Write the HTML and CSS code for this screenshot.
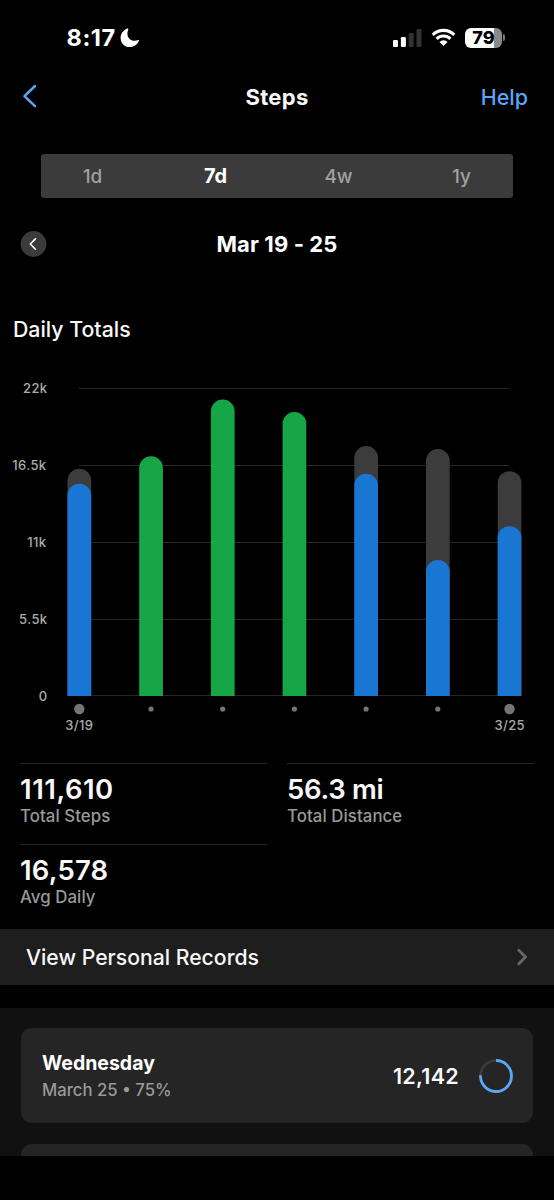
FILE: index.html
```html
<!DOCTYPE html>
<html lang="en">
<head>
    <meta charset="UTF-8">
    <meta name="viewport" content="width=device-width, initial-scale=1.0">
    <title>Steps</title>
    <link rel="stylesheet" href="styles.css">
</head>
<body>
    <!-- Status Bar -->
    <div class="status-bar">
        <div class="status-left">
            <span class="time">8:17</span>
            <svg class="moon" width="20" height="20" viewBox="0 0 20 20">
                <path d="M7.300 .6C3.700 2 .6 5.500 .6 9.900c0 5.200 4 9.200 9.200 9.200 4.200 0 7.900-2.700 9.200-6.300.2-.7-.3-1-.9-.7-1 .5-2.100.7-3.300.7-4.400 0-7.400-3-7.400-7.400 0-1.400.3-2.800.9-4 .3-.6-.4-1-1-.8z" fill="#fff"/>
            </svg>
        </div>
        <div class="status-right">
            <svg width="29" height="18" viewBox="0 0 29 18">
                <rect x="0" y="11" width="5" height="7" rx="1.300" fill="#fff"/>
                <rect x="7.900" y="8" width="5" height="10" rx="1.300" fill="#fff"/>
                <rect x="15.700" y="4" width="5" height="14" rx="1.300" fill="#333"/>
                <rect x="23.500" y="0" width="5" height="18" rx="1.300" fill="#333"/>
            </svg>
            <svg class="wifi" width="25" height="19" viewBox="0 0 26 19">
                <path d="M1.800 6.700a16 16 0 0 1 22.400 0M5.800 10.900a10.300 10.300 0 0 1 14.400 0" fill="none" stroke="#fff" stroke-width="3.200"/>
                <path d="M8.800 14.100a6 6 0 0 1 8.400 0L13 18.300z" fill="#fff"/>
            </svg>
            <div class="battery"><span>79</span></div>
            <div class="battery-tip"></div>
        </div>
    </div>

    <!-- Navigation -->
    <div class="nav">
        <svg class="back" width="14" height="24" viewBox="0 0 14 24">
            <path d="M13 2L2.500 12.200l10.500 10" fill="none" stroke="#58a6f5" stroke-width="2.500" stroke-linecap="round" stroke-linejoin="round"/>
        </svg>
        <h1>Steps</h1>
        <a class="help">Help</a>
    </div>

    <!-- Period Tabs -->
    <div class="tabs">
        <span>1d</span>
        <span class="active">7d</span>
        <span>4w</span>
        <span>1y</span>
    </div>

    <div class="range">
        <svg width="26" height="26" viewBox="0 0 26 26">
            <circle cx="12.500" cy="13" r="12.900" fill="#3b3b3b"/>
            <path d="M14.400 7.900l-5.100 5.100 5.100 5.200" fill="none" stroke="#fff" stroke-width="1.600" stroke-linecap="round" stroke-linejoin="round"/>
        </svg>
        <h2>Mar 19 - 25</h2>
    </div>

    <h3>Daily Totals</h3>

    <!-- Chart -->
    <svg class="chart" width="554" height="375" viewBox="0 370 554 375">
        <g class="grid">
            <path d="M79 388.500H509"/>
            <path d="M79 465.500H509"/>
            <path d="M79 542.500H509"/>
            <path d="M79 619.500H509"/>
            <path d="M79 695.500H509"/>
        </g>
        <g class="axis y-axis">
            <text x="47.500" y="393">22k</text>
            <text x="46.500" y="470">16.5k</text>
            <text x="46.500" y="547">11k</text>
            <text x="47.500" y="624">5.5k</text>
            <text x="47.500" y="701">0</text>
        </g>
        <g class="goal">
            <path d="M67.500 696V480.500a11.850 11.850 0 0 1 23.700 0V696z"/>
            <path d="M354.300 696V457.800a11.850 11.850 0 0 1 23.700 0V696z"/>
            <path d="M426 696V460.800a11.850 11.850 0 0 1 23.700 0V696z"/>
            <path d="M497.700 696V483a11.850 11.850 0 0 1 23.700 0V696z"/>
        </g>
        <g class="under">
            <path d="M67.500 696V495.500a11.850 11.850 0 0 1 23.700 0V696z"/>
            <path d="M354.300 696V485.700a11.850 11.850 0 0 1 23.700 0V696z"/>
            <path d="M426 696V571.800a11.850 11.850 0 0 1 23.700 0V696z"/>
            <path d="M497.700 696V538a11.850 11.850 0 0 1 23.700 0V696z"/>
        </g>
        <g class="met">
            <path d="M139.200 696V468a11.850 11.850 0 0 1 23.700 0V696z"/>
            <path d="M210.900 696V411.400a11.850 11.850 0 0 1 23.700 0V696z"/>
            <path d="M282.600 696V423.800a11.850 11.850 0 0 1 23.700 0V696z"/>
        </g>
        <g class="dots">
            <circle cx="79.300" cy="709" r="5.200"/>
            <circle cx="151" cy="709" r="2.600"/>
            <circle cx="222.700" cy="709" r="2.600"/>
            <circle cx="294.400" cy="709" r="2.600"/>
            <circle cx="366.100" cy="709" r="2.600"/>
            <circle cx="437.800" cy="709" r="2.600"/>
            <circle cx="509.500" cy="709" r="5.200"/>
        </g>
        <g class="axis x-axis">
            <text x="79.300" y="730">3/19</text>
            <text x="509.700" y="730">3/25</text>
        </g>
    </svg>

    <!-- Totals -->
    <div class="stats">
        <div class="stat">
            <div class="value total">111,610</div>
            <div class="label">Total Steps</div>
        </div>
        <div class="stat">
            <div class="value distance">56.3 mi</div>
            <div class="label">Total Distance</div>
        </div>
        <div class="stat">
            <div class="value">16,578</div>
            <div class="label">Avg Daily</div>
        </div>
    </div>

    <div class="records">
        <span>View Personal Records</span>
        <svg width="12" height="18" viewBox="0 0 12 18">
            <path d="M2.800 2.300L9.500 9l-6.700 6.700" fill="none" stroke="#666" stroke-width="3" stroke-linecap="round" stroke-linejoin="round"/>
        </svg>
    </div>

    <!-- Day List -->
    <div class="days">
        <div class="day">
            <div>
                <div class="day-name">Wednesday</div>
                <div class="day-date">March 25 • 75%</div>
            </div>
            <div class="day-steps">12,142</div>
            <svg width="34" height="34" viewBox="0 0 34 34">
                <circle cx="17" cy="17" r="15.500" fill="none" stroke="#3c3c3c" stroke-width="2.600"/>
                <path d="M17 1.500A15.500 15.500 0 1 1 1.500 16.300" fill="none" stroke="#5aa5f5" stroke-width="2.800"/>
            </svg>
        </div>
        <div class="day"></div>
    </div>
</body>
</html>
```
FILE: styles.css
```css
/* General Styles */
* {
    box-sizing: border-box;
}

body {
    font-family: Inter, "Liberation Sans", sans-serif;
    background-color: #000;
    color: #f8f8f8;
    width: 554px;
    height: 1200px;
    margin: 0;
    overflow: hidden;
}

h1, h2, h3 {
    margin: 0;
    white-space: nowrap;
}

svg {
    display: block;
    flex-shrink: 0;
}

/* Status Bar */
.status-bar {
    display: flex;
    justify-content: space-between;
    align-items: center;
    height: 75px;
    padding: 0 49px 0 66.5px;
}

.status-left,
.status-right {
    display: flex;
    align-items: center;
}

.time {
    font-size: 23.5px;
    font-weight: 700;
    line-height: 28px;
    letter-spacing: 0.6px;
    color: #fff;
}

.moon {
    margin-left: 4.5px;
}

.wifi {
    margin: 0 9px;
}

.battery {
    width: 37px;
    height: 20px;
    border-radius: 6px;
    background: linear-gradient(to right, #fff 29px, #8a8a8a 29px);
    color: #000;
    font-size: 18px;
    font-weight: 800;
    line-height: 20px;
    text-align: center;
}

.battery-tip {
    width: 2px;
    height: 7px;
    margin-left: 1px;
    border-radius: 0 2px 2px 0;
    background-color: #777;
}

/* Navigation */
.nav {
    display: grid;
    grid-template-columns: 1fr auto 1fr;
    align-items: center;
    height: 43px;
    padding: 0 26px 0 22px;
}

.nav h1 {
    padding-left: 4px;
    font-size: 22px;
    font-weight: 700;
    letter-spacing: 0.3px;
}

.back {
    margin-top: -2px;
}

.help {
    justify-self: end;
    font-size: 21.5px;
    font-weight: 500;
    color: #58a6f5;
}

/* Period Tabs */
.tabs {
    display: flex;
    justify-content: center;
    height: 44px;
    margin: 36px 41px 0;
    border-radius: 3px;
    background-color: #3b3b3b;
    color: #a0a0a0;
    font-size: 19px;
    font-weight: 500;
    line-height: 45px;
    text-align: center;
}

.tabs span {
    flex: 0 0 123px;
}

.tabs .active {
    color: #fff;
    font-size: 20px;
    font-weight: 700;
}

.range {
    display: grid;
    grid-template-columns: 26px 1fr 26px;
    align-items: center;
    height: 26px;
    margin: 33px 21px 0;
    text-align: center;
}

.range svg {
    overflow: visible;
}

.range h2 {
    color: #fff;
    font-size: 22px;
    font-weight: 700;
    line-height: 26px;
    letter-spacing: 0.1px;
}

h3 {
    margin: 60px 0 0 13px;
    font-size: 21.3px;
    font-weight: 500;
    line-height: 25px;
}

/* Chart */
.chart {
    margin-top: 28px;
}

.grid {
    stroke: #262626;
    stroke-width: 1;
}

.axis {
    fill: #acacac;
    font-size: 13px;
    font-weight: 500;
    letter-spacing: 0.4px;
}

.y-axis {
    text-anchor: end;
}

.x-axis {
    text-anchor: middle;
}

.goal {
    fill: #3c3c3c;
}

.under {
    fill: #1976d2;
}

.met {
    fill: #17a647;
}

.dots {
    fill: #757575;
}

/* Totals */
.stats {
    display: grid;
    grid-template-columns: 247px 247px;
    column-gap: 20px;
    height: 166px;
    margin: 18px 0 0 20px;
    grid-auto-rows: 81px;
}

.stat {
    padding-top: 8px;
    border-top: 1px solid #262626;
}

.value {
    font-size: 27.5px;
    font-weight: 600;
    line-height: 34px;
    letter-spacing: 0.2px;
}

.total {
    letter-spacing: 0.5px;
}

.distance {
    letter-spacing: -0.3px;
}

.label {
    font-size: 16.8px;
    font-weight: 500;
    line-height: 20px;
    letter-spacing: 0.08px;
    color: #999;
}

.records {
    display: flex;
    justify-content: space-between;
    align-items: center;
    height: 56px;
    padding: 0 26px;
    background-color: #1e1e1e;
    font-size: 21.2px;
    font-weight: 500;
}

/* Day List */
.days {
    height: 148px;
    margin-top: 23px;
    padding: 20px 21px 0;
    background-color: #111;
    overflow: hidden;
}

.day {
    display: flex;
    align-items: center;
    height: 95px;
    margin-bottom: 21px;
    padding: 0 20px 0 21px;
    border-radius: 11px;
    background-color: #252525;
}

.day-name {
    color: #fff;
    font-size: 19.5px;
    font-weight: 700;
    line-height: 28px;
}

.day-date {
    font-size: 16.7px;
    font-weight: 500;
    line-height: 26px;
    color: #999;
}

.day-steps {
    margin: 0 20px 0 auto;
    font-size: 21.5px;
    font-weight: 600;
    letter-spacing: 0.3px;
}
```
